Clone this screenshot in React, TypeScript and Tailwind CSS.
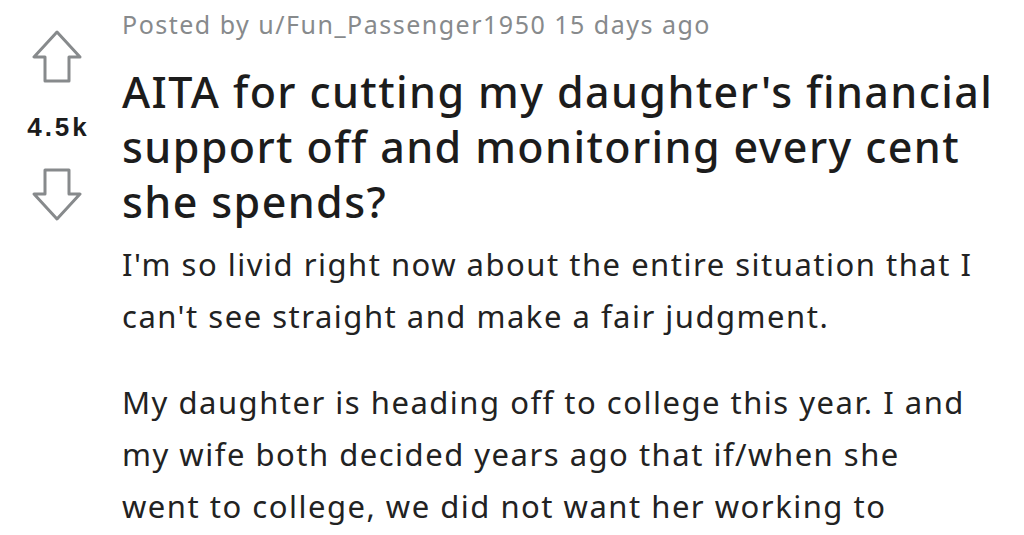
const Arrow = ({ down = false }: { down?: boolean }) => (
  <svg width="50" height="54" viewBox="0 0 50 54" fill="none" className={down ? 'rotate-180' : ''}>
    <path
      d="M25 2 L2 27 H13 V51 H37 V27 H48 Z"
      stroke="#878a8c"
      strokeWidth={3}
      strokeLinejoin="round"
    />
  </svg>
)

export default function App() {
  return (
    <div className="w-[1024px] h-[535px] bg-white overflow-hidden flex" style={{ fontFamily: '"Noto Sans", "Open Sans", sans-serif' }}>
      {/* vote column */}
      <div className="w-[114px] shrink-0 flex flex-col items-center pt-[30px]">
        <Arrow />
        <div className="mt-[30px] pl-[3px] text-[26px] leading-none font-bold tracking-[3px] text-[#1c1c1c]" style={{ fontFamily: '"Liberation Sans", Arial, sans-serif' }}>
          4.5k
        </div>
        <div className="mt-[27px]">
          <Arrow down />
        </div>
      </div>

      {/* post body */}
      <div className="flex-1 pl-[8px]">
        <div className="pt-[7px] text-[25px] leading-[34px] tracking-[1.5px] text-[#878a8c]">
          Posted by u/Fun_Passenger1950 15 days ago
        </div>
        <h1 className="mt-[23px] text-[43px] leading-[55px] font-medium tracking-[1.4px] text-[#1c1c1c]">
          AITA for cutting my daughter's financial<br />
          support off and monitoring every cent<br />
          she spends?
        </h1>
        <div className="mt-[9px] text-[31px] leading-[52px] tracking-[1.5px] text-[#222222]">
          <p>
            I'm so livid right now about the entire situation that I<br />
            can't see straight and make a fair judgment.
          </p>
          <p className="mt-[34px]">
            My daughter is heading off to college this year. I and<br />
            my wife both decided years ago that if/when she<br />
            went to college, we did not want her working to
          </p>
        </div>
      </div>
    </div>
  )
}
